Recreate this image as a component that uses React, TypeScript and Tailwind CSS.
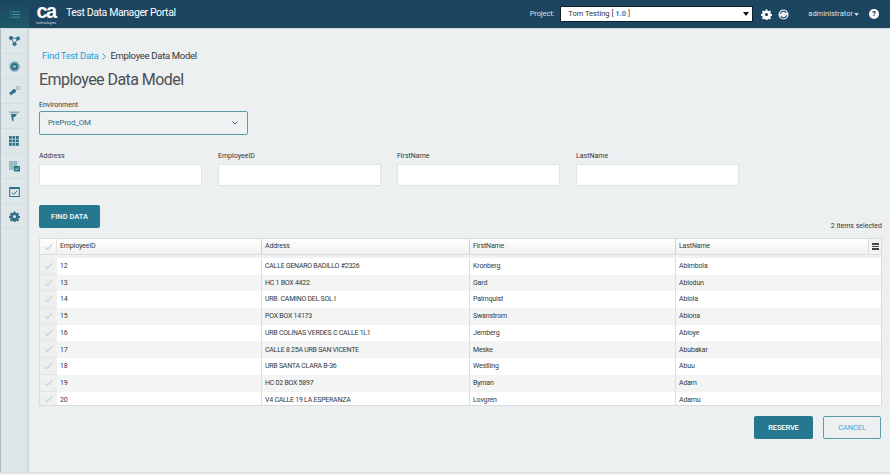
import React from "react";

const rows = [
  ["12", "CALLE GENARO BADILLO #2326", "Kronberg", "Abimbola"],
  ["13", "HC 1 BOX 4422", "Gard", "Abiodun"],
  ["14", "URB. CAMINO DEL SOL I", "Palmquist", "Abiola"],
  ["15", "POX BOX 14173", "Swanstrom", "Abiona"],
  ["16", "URB COLINAS VERDES C CALLE 1L1", "Jernberg", "Abioye"],
  ["17", "CALLE 8 25A URB SAN VICENTE", "Meske", "Abubakar"],
  ["18", "URB SANTA CLARA B-36", "Westling", "Abuu"],
  ["19", "HC 02 BOX 5897", "Byman", "Adam"],
  ["20", "V4 CALLE 19 LA ESPERANZA", "Lovgren", "Adamu"],
];

const Check = () => (
  <svg width="9" height="8" viewBox="0 0 9 8" fill="none" stroke="#cfd3d4" strokeWidth="1.3">
    <path d="M1 4.2 L3.4 6.4 L8 1.2" />
  </svg>
);

const Side = ({ children }: { children: React.ReactNode }) => (
  <div className="h-[25px] flex items-center justify-center border-b border-[#d5dde1]">{children}</div>
);

const c = "#2f7387";

const Field = ({ label }: { label: string }) => (
  <div className="w-[163px]">
    <div className="text-[7px] leading-[12px] text-[#33383b] mb-[2px]">{label}</div>
    <div className="h-[22px] bg-white border border-[#dfe3e4] rounded-[1px]" />
  </div>
);

export default function App() {
  return (
    <div className="w-[890px] h-[475px] overflow-hidden flex flex-col bg-[#ecf0f1] font-['Roboto','Lato',sans-serif]">
      <header className="h-[29px] shrink-0 bg-[#1c4560] flex items-center border-b border-[#d3d9dc]">
        <div className="w-[29px] h-full flex items-center justify-center bg-gradient-to-b from-[#1c4560] to-[#1f5a68]">
          <svg width="10" height="7" viewBox="0 0 13 9" stroke="#3f9aa5" strokeWidth="1.3">
            <path d="M3 1H13M3 4.5H13M3 8H13M0 1H1.6M0 4.5H1.6M0 8H1.6" />
          </svg>
        </div>
        <div className="w-[22px] flex flex-col items-center ml-[6px]">
          <span className="text-[20px] leading-[15px] font-bold text-white tracking-[-1.5px] font-['Liberation_Sans',sans-serif]">ca</span>
          <span className="text-[3.5px] leading-[4px] text-[#d5dde1] mt-[2px]">technologies</span>
        </div>
        <div className="ml-[9px] -mt-[2px] text-[10.5px] text-white tracking-[-0.4px]">Test Data Manager Portal</div>
        <div className="ml-auto flex items-center mr-[11px]">
          <span className="text-[7.5px] text-[#d9e2e7] mr-[6px] tracking-[-0.1px]">Project:</span>
          <div className="w-[193px] h-[16px] bg-white border border-[#0f1f2b] flex items-center pl-[7px] pr-[3px] text-[7.5px] text-[#333]">
            <span>
              Tom Testing [ <span className="text-[#2e86c1] font-bold">1.0</span> ]
            </span>
            <svg className="ml-auto" width="6" height="4" viewBox="0 0 6 4" fill="#111">
              <path d="M0 0H6L3 4Z" />
            </svg>
          </div>
          <svg className="ml-[8px]" width="11" height="11" viewBox="0 0 24 24" fill="#fff">
            <path fillRule="evenodd" d="M10 1h4l.6 3.1 2 .8 2.6-1.8 2.8 2.8-1.8 2.6.8 2 3 .5v4l-3 .6-.8 2 1.800 2.600-2.800 2.800-2.600-1.800-2 .8-.6 3h-4l-.6-3-2-.8-2.600 1.800-2.800-2.800 1.800-2.600-.8-2-3-.6v-4l3-.5.8-2L2 5.900l2.800-2.800L7.400 4.900l2-.8zM12 8.500a3.500 3.500 0 1 0 0 7 3.500 3.500 0 0 0 0-7z" />
          </svg>
          <svg className="ml-[6px]" width="11" height="11" viewBox="0 0 12 12">
            <circle cx="6" cy="6" r="5.500" fill="#e8eef1" />
            <path d="M2.500 5a3.600 3.600 0 0 1 6.500-1M9.500 7a3.600 3.600 0 0 1-6.500 1" fill="none" stroke="#1c4560" strokeWidth="1.200" />
          </svg>
          <span className="ml-[19px] text-[7.5px] text-[#d9e2e7]">administrator</span>
          <svg className="ml-[1px]" width="5" height="3" viewBox="0 0 6 4" fill="#d9e2e7">
            <path d="M0 0H6L3 4Z" />
          </svg>
          <div className="ml-[10px] w-[10px] h-[10px] rounded-full bg-white text-[#1c4560] text-[8px] leading-[10px] font-black text-center">?</div>
        </div>
      </header>

      <div className="flex-1 flex min-h-0 mb-[2px] border-b border-[#d3d9dc]">
        <aside className="w-[29px] shrink-0 bg-[#dfe6ea] border-l border-[#aebcc3] border-r-2 border-r-[#cfd7db] flex flex-col">
          <Side>
            <svg width="11" height="10" viewBox="0 0 11 10" fill={c} stroke={c}>
              <path d="M2 2L5.500 8L9 2.500Z" fill="none" strokeWidth="0.900" />
              <circle cx="2" cy="2" r="1.600" />
              <circle cx="9" cy="2.500" r="1.600" />
              <circle cx="5.500" cy="8" r="1.600" />
            </svg>
          </Side>
          <Side>
            <svg width="11" height="11" viewBox="0 0 11 11">
              <circle cx="5.500" cy="5.500" r="5.200" fill="#7fa9b5" />
              <circle cx="5.500" cy="5.500" r="3.500" fill={c} />
              <circle cx="5.500" cy="5.500" r="1.300" fill="#b6ced6" />
            </svg>
          </Side>
          <Side>
            <svg width="11" height="10" viewBox="0 0 11 10" fill={c}>
              <path d="M0 7L4 4L6 6L2 9.500Z" />
              <circle cx="5" cy="5" r="2" />
              <circle cx="9" cy="2" r="1.700" fill="none" stroke="#8db2bd" />
            </svg>
          </Side>
          <Side>
            <svg width="11" height="11" viewBox="0 0 11 11" fill={c}>
              <path d="M0 0.500H10.500L9.800 2.200H0.500Z" fill="#8db2bd" />
              <path d="M2 3H8L6 6H4.500V10.500L3 9.500Z" />
            </svg>
          </Side>
          <Side>
            <svg width="10" height="10" viewBox="0 0 10 10" fill={c}>
              {[0, 3.5, 7].flatMap((x) =>
                [0, 3.5, 7].map((y) => <rect key={x + "-" + y} x={x} y={y} width="2.800" height="2.800" />)
              )}
            </svg>
          </Side>
          <Side>
            <svg width="11" height="11" viewBox="0 0 11 11">
              <rect x="0" y="0" width="8.500" height="9" fill="#9dbcc6" />
              <rect x="5" y="5" width="6" height="5.500" fill={c} />
              <path d="M6.300 7.700L7.500 9L9.800 6.500" fill="none" stroke="#fff" strokeWidth="0.800" />
            </svg>
          </Side>
          <Side>
            <svg width="11" height="11" viewBox="0 0 11 11" fill="none" stroke={c}>
              <rect x="0.700" y="1.500" width="9.600" height="9" fill="#dfe6ea" />
              <path d="M0.700 2.300H10.300" strokeWidth="1.500" />
              <path d="M3 6.500L4.800 8.300L8 5" />
            </svg>
          </Side>
          <Side>
            <svg width="11" height="11" viewBox="0 0 24 24" fill={c}>
              <path fillRule="evenodd" d="M10 1h4l.6 3.100 2 .8 2.600-1.800 2.800 2.800-1.800 2.600.8 2 3 .5v4l-3 .6-.8 2 1.800 2.600-2.800 2.800-2.600-1.800-2 .8-.6 3h-4l-.6-3-2-.8-2.600 1.800-2.800-2.800 1.800-2.600-.8-2-3-.6v-4l3-.5.8-2L2 5.900l2.800-2.800L7.400 4.900l2-.8zM12 8.500a3.500 3.500 0 1 0 0 7 3.500 3.500 0 0 0 0-7z" />
            </svg>
          </Side>
        </aside>

        <main className="flex-1 min-w-0 pl-[10px] pr-[8px] pt-[20px] flex flex-col">
          <div className="pl-[3px] flex items-center text-[9.5px] leading-[14px] tracking-[-0.3px] text-[#33383b]">
            <span className="text-[#2a9fd8]">Find Test Data</span>
            <svg className="mx-[4px]" width="4" height="7" viewBox="0 0 4 7" fill="none" stroke="#2a9fd8">
              <path d="M0.500 0.500L3.500 3.500L0.500 6.500" />
            </svg>
            <span>Employee Data Model</span>
          </div>
          <h1 className="mt-[5px] text-[16px] leading-[24px] tracking-[-0.55px] text-[#4a4f52]">Employee Data Model</h1>
          <div className="mt-[7px] text-[7px] leading-[12px] text-[#33383b]">Environment</div>
          <div className="w-[209px] h-[24px] border border-[#5f9aa8] rounded-[2px] bg-[#eef2f3] flex items-center pl-[8px] pr-[9px] text-[8px] tracking-[-0.2px] text-[#2f6f80]">
            PreProd_OM
            <svg className="ml-auto" width="6" height="4" viewBox="0 0 6 4" fill="none" stroke="#2f6f80">
              <path d="M0.500 0.500L3 3L5.500 0.500" />
            </svg>
          </div>
          <div className="mt-[15px] flex gap-[16px]">
            <Field label="Address" />
            <Field label="EmployeeID" />
            <Field label="FirstName" />
            <Field label="LastName" />
          </div>
          <button className="mt-[19px] w-[61px] h-[23px] bg-[#26788f] rounded-[2px] text-white text-[7.5px] font-medium">
            FIND DATA
          </button>
          <div className="-mt-[8px] h-[12px] text-right text-[7px] leading-[12px] text-[#33383b]">2 items selected</div>
          <div className="mt-[6px] h-[168px] border border-[#d9dddf] bg-white overflow-hidden relative text-[7px] tracking-[-0.15px] text-[#33383b]">
            <div className="h-[16px] flex items-stretch bg-gradient-to-b from-white to-[#f0f1f2] border-b border-[#d9dddf]">
              <div className="w-[17px] flex items-center justify-center border-r border-[#e3e5e6]"><Check /></div>
              <div className="w-[205px] pl-[3px] flex items-center border-r border-[#cfd2d4]">EmployeeID</div>
              <div className="w-[208px] pl-[3px] flex items-center border-r border-[#cfd2d4]">Address</div>
              <div className="w-[206px] pl-[3px] flex items-center border-r border-[#cfd2d4]">FirstName</div>
              <div className="flex-1 pl-[3px] flex items-center">LastName</div>
            </div>
            <div className="h-[3px] bg-[#f0f1f2]" />
            {rows.map((r, i) => (
              <div key={r[0]} className={"h-[16.700px] flex items-stretch " + (i % 2 ? "bg-[#f3f4f4]" : "bg-white")}>
                <div className="w-[17px] bg-[#eef0f0] border-b border-[#e4e6e6] flex items-center justify-center"><Check /></div>
                <div className="w-[205px] pl-[3px] flex items-center border-r border-[#dcdfe0]">{r[0]}</div>
                <div className="w-[208px] pl-[3px] flex items-center border-r border-[#dcdfe0] tracking-[-0.25px]">{r[1]}</div>
                <div className="w-[206px] pl-[3px] flex items-center border-r border-[#dcdfe0]">{r[2]}</div>
                <div className="flex-1 pl-[3px] flex items-center">{r[3]}</div>
              </div>
            ))}
            <div className="absolute right-0 top-0 w-[13px] h-[16px] bg-[#f3f4f4] border-l border-b border-[#d9dddf] flex flex-col items-center justify-center gap-[1px]">
              <div className="w-[7px] h-[1.5px] bg-[#444]" />
              <div className="w-[7px] h-[1.5px] bg-[#444]" />
              <div className="w-[7px] h-[1.5px] bg-[#444]" />
            </div>
          </div>
          <div className="mt-[10px] flex justify-end gap-[10px] pr-[1px]">
            <button className="w-[59px] h-[23px] bg-[#26788f] rounded-[2px] text-white text-[7.5px] font-medium tracking-[-0.15px]">RESERVE</button>
            <button className="w-[58px] h-[23px] border border-[#5f9aa8] rounded-[2px] text-[#3fa9d8] text-[7.5px] tracking-[-0.1px]">CANCEL</button>
          </div>
        </main>
      </div>
    </div>
  );
}
